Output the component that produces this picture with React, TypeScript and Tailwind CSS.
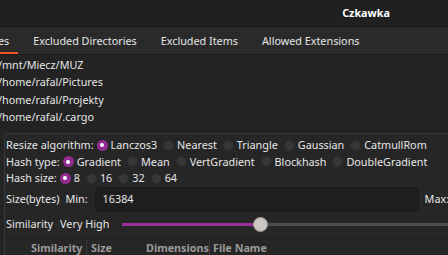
import React from 'react';

const Radio = ({ checked }: { checked?: boolean }) =>
  checked ? (
    <span className="w-[11px] h-[11px] rounded-full bg-[#922c92] flex items-center justify-center shrink-0">
      <span className="w-[4px] h-[4px] rounded-full bg-white" />
    </span>
  ) : (
    <span className="w-[11px] h-[11px] rounded-full bg-[#363636] border border-[#2c2c2c] shrink-0" />
  );

const RadioRow = ({ label, items, selected }: { label: string; items: string[]; selected: number }) => (
  <div className="flex items-center h-[16.5px] whitespace-nowrap">
    <span className="mr-[3px]">{label}</span>
    {items.map((item, i) => (
      <span key={item} className="flex items-center mr-[6px]">
        <Radio checked={i === selected} />
        <span className="ml-[3px]">{item}</span>
      </span>
    ))}
  </div>
);

const App = () => {
  const tabs = ['Excluded Directories', 'Excluded Items', 'Allowed Extensions'];
  const dirs = ['/mnt/Miecz/MUZ', '/home/rafal/Pictures', '/home/rafal/Projekty', '/home/rafal/.cargo'];

  return (
    <div
      className="w-[448px] h-[255px] overflow-hidden bg-[#242424] text-[#e6e6e6] text-[10.8px] flex flex-col"
      style={{ fontFamily: '"Noto Sans", "Open Sans", sans-serif' }}
    >
      <div className="h-[27px] shrink-0 bg-[#202020] border-b border-[#141414] flex items-center justify-end pr-[58px]">
        <span className="font-bold text-white">Czkawka</span>
      </div>

      <div className="h-[28px] shrink-0 bg-[#2a2a2a] border-b border-[#1a1a1a] flex items-stretch overflow-hidden whitespace-nowrap pt-[1px]">
        <div className="relative ml-[-105px] px-[12px] flex items-center">
          Included Directories
          <span className="absolute left-0 right-[3px] bottom-0 h-[2px] bg-[#e95420]" />
        </div>
        {tabs.map((t) => (
          <div key={t} className="px-[12px] flex items-center">
            {t}
          </div>
        ))}
      </div>

      <div className="h-[78px] shrink-0 bg-[#232323] ml-[-2px] pt-[1px]">
        {dirs.map((d) => (
          <div key={d} className="h-[17.5px] flex items-center whitespace-nowrap">
            {d}
          </div>
        ))}
      </div>

      <div className="flex-1 ml-[4px] border-l border-t border-[#383838] rounded-tl-[4px] bg-[#262626] pl-[1px] pt-[3px] flex flex-col whitespace-nowrap">
        <RadioRow
          label="Resize algorithm:"
          items={['Lanczos3', 'Nearest', 'Triangle', 'Gaussian', 'CatmullRom']}
          selected={0}
        />
        <RadioRow
          label="Hash type:"
          items={['Gradient', 'Mean', 'VertGradient', 'Blockhash', 'DoubleGradient']}
          selected={0}
        />
        <RadioRow label="Hash size:" items={['8', '16', '32', '64']} selected={0} />

        <div className="h-[25px] flex items-center shrink-0">
          <span>Size(bytes)</span>
          <span className="ml-[6px]">Min:</span>
          <div className="ml-[7px] w-[324px] h-[25px] rounded-[5px] bg-[#1e1e1e] border border-[#1a1a1a] flex items-center pl-[7px] shrink-0">
            16384
          </div>
          <span className="ml-[6px]">Max:</span>
        </div>

        <div className="h-[26px] flex items-center shrink-0">
          <span>Similarity</span>
          <span className="ml-[7px]">Very High</span>
          <div className="relative ml-[13px] flex-1 h-[3px] bg-[#4e4e4e] mr-[-20px]">
            <div className="absolute left-0 top-0 h-[3px] w-[138px] bg-[#9a2d9a]" />
            <div className="absolute left-[131px] top-[-6px] w-[15px] h-[15px] rounded-full bg-[#cdc6c2] border border-[#9a948f]" />
          </div>
        </div>

        <div className="flex-1 border-t border-[#1c1c1c] flex items-center text-[#9a9a9a] font-bold pt-[1px]">
          <span className="w-[81px] pl-[25px] border-r border-[#3a3a3a]">Similarity</span>
          <span className="w-[59px] pl-[4px]">Size</span>
          <span className="w-[64px] pr-[3px] border-r border-[#3a3a3a]">Dimensions</span>
          <span className="pl-[3px]">File Name</span>
        </div>
      </div>
    </div>
  );
};

export default App;
